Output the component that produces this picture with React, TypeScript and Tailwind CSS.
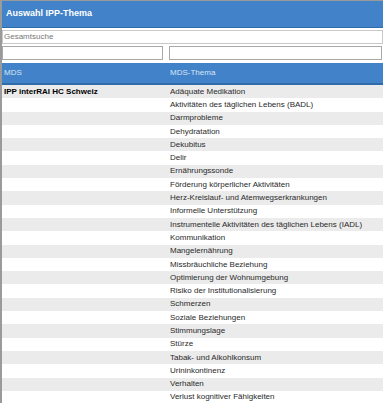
const themen = [
  'Adäquate Medikation',
  'Aktivitäten des täglichen Lebens (BADL)',
  'Darmprobleme',
  'Dehydratation',
  'Dekubitus',
  'Delir',
  'Ernährungssonde',
  'Förderung körperlicher Aktivitäten',
  'Herz-Kreislauf- und Atemwegserkrankungen',
  'Informelle Unterstützung',
  'Instrumentelle Aktivitäten des täglichen Lebens (IADL)',
  'Kommunikation',
  'Mangelernährung',
  'Missbräuchliche Beziehung',
  'Optimierung der Wohnumgebung',
  'Risiko der Institutionalisierung',
  'Schmerzen',
  'Soziale Beziehungen',
  'Stimmungslage',
  'Stürze',
  'Tabak- und Alkohlkonsum',
  'Urininkontinenz',
  'Verhalten',
  'Verlust kognitiver Fähigkeiten',
];

export default function App() {
  return (
    <div className="w-[383px] h-[403px] overflow-hidden bg-white border-l-2 border-t border-[#9a9a9a] font-['Liberation_Sans',Arial,sans-serif]">
      {/* Title bar */}
      <div className="h-[27px] bg-[#4282c8] border-b border-[#2f6aab] flex items-center px-[4px]">
        <span className="text-[9px] font-bold text-white">Auswahl IPP-Thema</span>
      </div>

      {/* Search */}
      <div className="mt-[2px] h-[14px] border border-[#c8c8c8] flex items-center px-[1px]">
        <span className="text-[8px] text-[#777]">Gesamtsuche</span>
      </div>
      <div className="flex gap-[6px] mt-[2px] pr-[1px]">
        <input className="w-[161px] h-[14px] border border-[#a8a8a8] bg-white" />
        <input className="flex-1 h-[14px] border border-[#a8a8a8] bg-white" />
      </div>

      {/* Table header */}
      <div className="mt-[3px] h-[22px] bg-[#4282c8] border-b-2 border-[#2f6aab] flex items-center text-[8px] text-[#d8e6f5]">
        <div className="w-[168px] pl-[2px]">MDS</div>
        <div className="flex-1">MDS-Thema</div>
      </div>

      {/* Rows */}
      <div>
        {themen.map((t, i) => (
          <div
            key={t}
            className={`h-[13.3px] flex items-center text-[8px] text-[#2a2a2a] ${i % 2 === 0 ? 'bg-[#ebebeb]' : 'bg-white'}`}
          >
            <div className="w-[168px] pl-[2px] font-bold text-black">
              {i === 0 ? 'IPP interRAI HC Schweiz' : ''}
            </div>
            <div className="flex-1 whitespace-nowrap">{t}</div>
          </div>
        ))}
      </div>
    </div>
  );
}
